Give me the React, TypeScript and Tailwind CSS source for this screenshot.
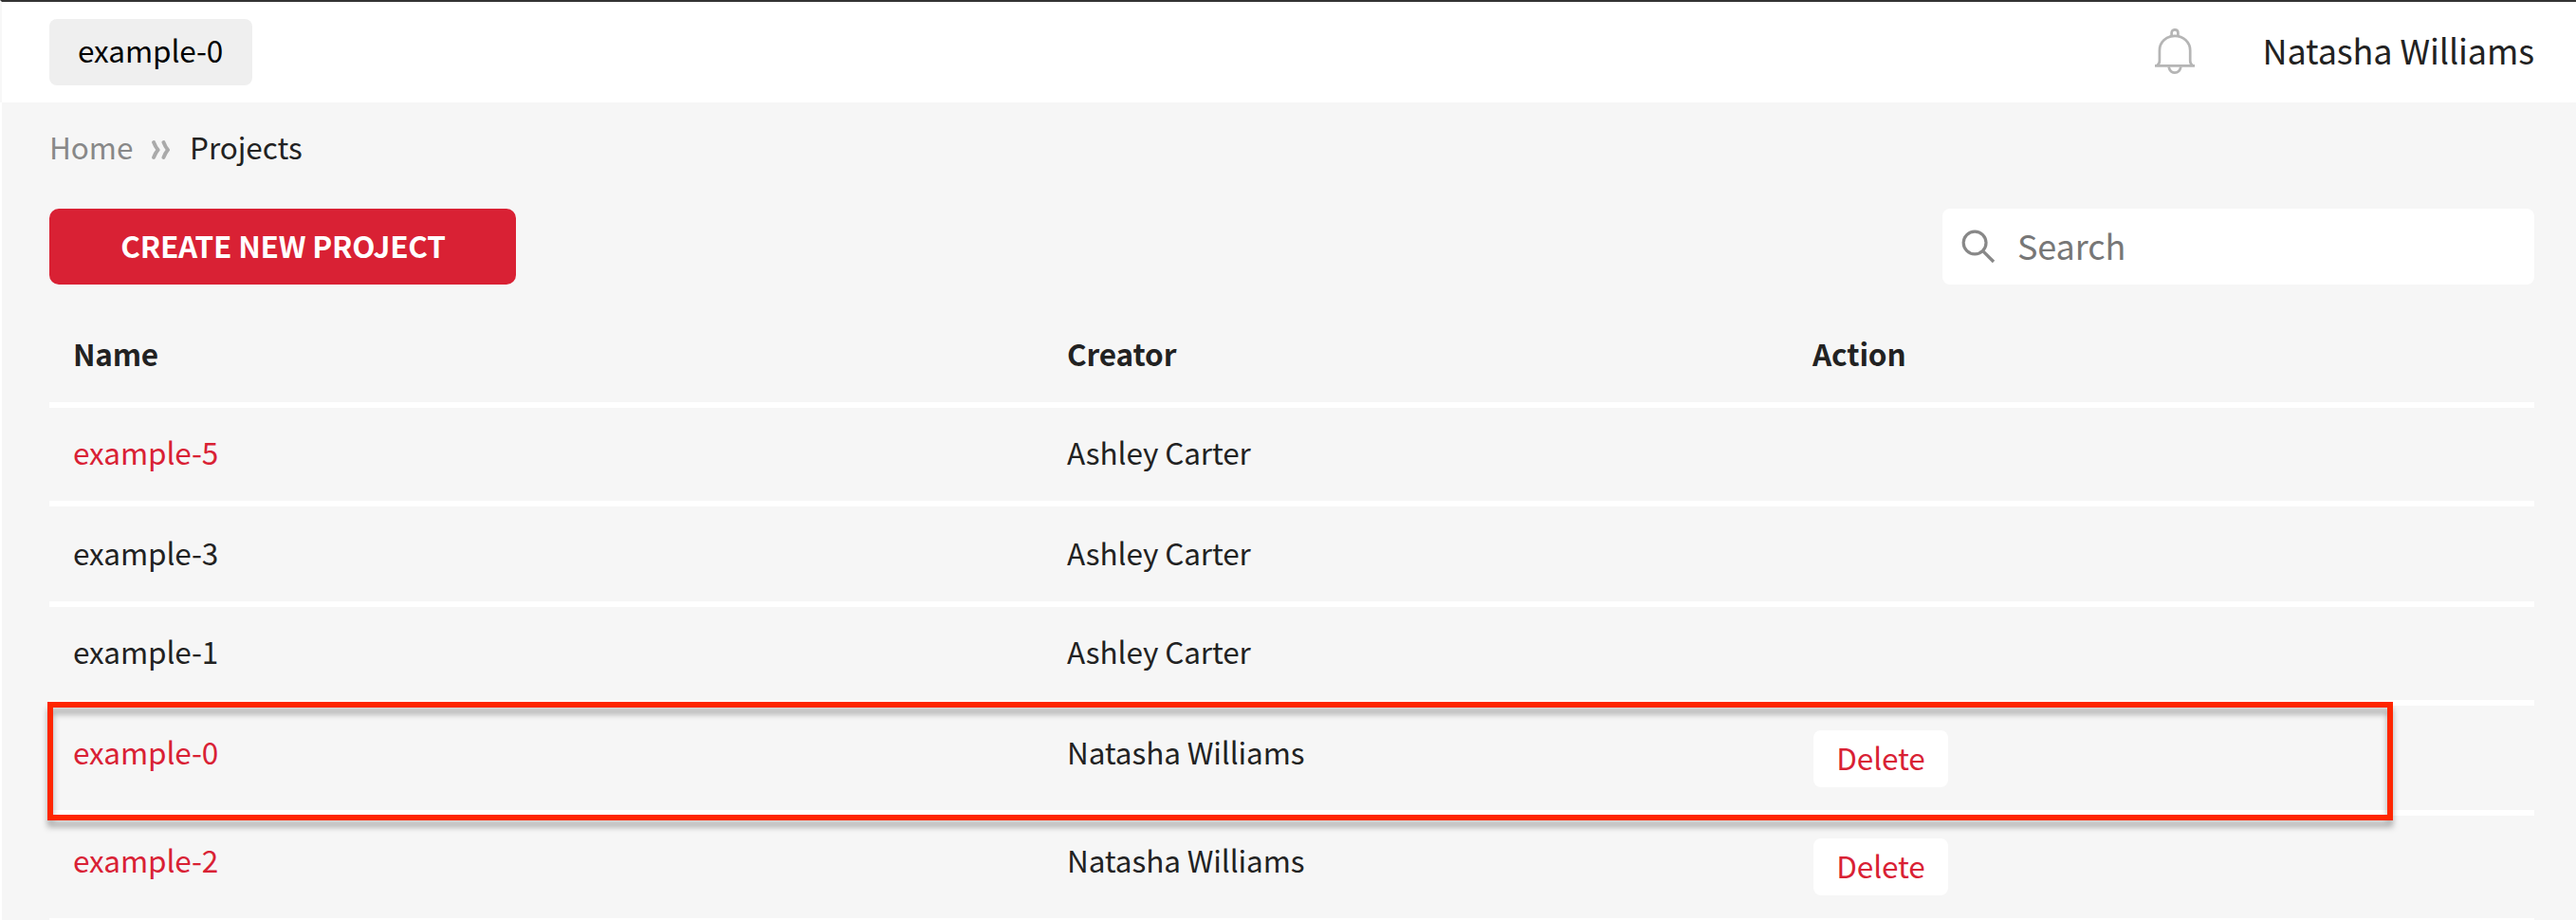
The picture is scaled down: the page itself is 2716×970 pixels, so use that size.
type Project = {
  name: string;
  creator: string;
  linked: boolean;
  deletable: boolean;
  layout: string;
};

const projects: Project[] = [
  { name: "example-5", creator: "Ashley Carter", linked: true, deletable: false, layout: "h-[104px] pt-[23px]" },
  { name: "example-3", creator: "Ashley Carter", linked: false, deletable: false, layout: "h-[106px] pt-[25px]" },
  { name: "example-1", creator: "Ashley Carter", linked: false, deletable: false, layout: "h-[104px] pt-[23px]" },
  { name: "example-0", creator: "Natasha Williams", linked: true, deletable: true, layout: "h-[116px] pt-[25px]" },
  { name: "example-2", creator: "Natasha Williams", linked: true, deletable: true, layout: "h-[114px] pt-[23px]" },
];

function BellIcon() {
  return (
    <svg className="mb-[2px]" width="42" height="48" viewBox="0 0 42 48" fill="none" stroke="#b5b5b5" strokeWidth="2.7">
      <path d="M2.4 39C4.6 37.6 4.9 36 4.9 34V23.2C4.9 14.6 12 7.9 21 7.9S37.2 14.6 37.2 23.2V34C37.2 36 37.5 37.6 39.6 39" />
      <path d="M17.6 8V4.8C17.6 2.6 19 1.3 21 1.3S24.4 2.6 24.4 4.8V8" />
      <path d="M0 39.4H42" strokeWidth="2.8" />
      <path d="M14.6 40.5C15.4 44.4 17.8 46.6 21 46.6S26.6 44.4 27.4 40.5" />
    </svg>
  );
}

function SearchIcon() {
  return (
    <svg width="36" height="36" viewBox="0 0 36 36" fill="none" stroke="#888888" strokeWidth="3.2">
      <circle cx="14.1" cy="14" r="11.9" />
      <path d="M22.6 22.6L34 34" strokeWidth="3.4" />
    </svg>
  );
}

function DoubleChevron() {
  return (
    <svg width="20" height="20" viewBox="0 0 20 20" fill="none" stroke="#aaaaaa" strokeWidth="4" strokeLinecap="round" strokeLinejoin="round">
      <path d="M2.1 2.1C3.2 5 4.6 7.7 6.6 10C4.6 12.3 3.2 15 2.1 17.9" />
      <path d="M12.5 2.1C13.6 5 15 7.7 17 10C15 12.3 13.6 15 12.5 17.9" />
    </svg>
  );
}

export default function App() {
  return (
    <div className="relative flex h-[970px] w-[2716px] flex-col overflow-hidden bg-[#f6f6f6] font-['Noto_Sans_CJK_SC',sans-serif] text-[31.5px] leading-[46px] text-[#222222]">
      <header className="flex h-[108px] shrink-0 items-center justify-between border-t-2 border-l-2 border-t-[#333333] border-l-[#f7f7f7] bg-white pr-11 pl-[50px]">
        <div className="flex h-[70px] w-[214px] items-center rounded-lg bg-[#efefef] pb-[6px] pl-[30px] text-black tracking-[-0.1px]">
          example-0
        </div>
        <div className="flex items-center">
          <BellIcon />
          <span className="ml-[72px] pb-[6px] text-[36px] leading-[52px] tracking-[-0.1px]">Natasha Williams</span>
        </div>
      </header>

      <main className="flex grow flex-col border-l-2 border-white pr-11 pl-[50px]">
        <nav className="mt-[23px] flex h-[46px] shrink-0 items-center">
          <span className="w-[108px] tracking-[-0.1px] text-[#888888]">Home</span>
          <span className="flex w-10 pt-[12px] pb-[4px]">
            <DoubleChevron />
          </span>
          <span className="tracking-[-0.05px]">Projects</span>
        </nav>

        <div className="mt-[43px] flex h-20 shrink-0 justify-between">
          <button className="w-[492px] rounded-[10px] bg-[#d92134] pb-[4px] pl-px font-bold tracking-[-0.22px] text-white">
            CREATE NEW PROJECT
          </button>
          <div className="flex w-[624px] items-center rounded-lg bg-white pl-5">
            <SearchIcon />
            <span className="ml-[23px] pb-[4px] text-[36px] leading-[52px] tracking-[-0.1px] text-[#777777]">Search</span>
          </div>
        </div>

        <div className="mt-[26px] flex shrink-0 flex-col">
          <div className="grid h-[104px] grid-cols-[1048px_786px_786px] border-b-6 border-white pt-[23px] font-bold tracking-[-0.1px]">
            <span className="pl-[25px] tracking-[-0.25px]">Name</span>
            <span className="pl-[25px]">Creator</span>
            <span className="pl-[25px]">Action</span>
          </div>
          {projects.map((p) => (
            <div key={p.name} className={`grid grid-cols-[1048px_786px_786px] items-start border-b-6 border-white tracking-[-0.1px] ${p.layout}`}>
              <span className={p.linked ? "pl-[25px] text-[#d92134]" : "pl-[25px]"}>{p.name}</span>
              <span className="pl-[25px]">{p.creator}</span>
              <span className="pt-px pl-[26px]">
                {p.deletable && (
                  <button className="flex h-[60px] w-[142px] items-center justify-center rounded-lg bg-white pb-[4px] text-[#d92134]">
                    Delete
                  </button>
                )}
              </span>
            </div>
          ))}
        </div>
      </main>

      <div className="pointer-events-none absolute top-[740px] left-[50px] h-[125px] w-[2473px] border-6 border-[#ff2600] drop-shadow-[0_7px_3px_rgba(0,0,0,0.3)]" />
    </div>
  );
}
